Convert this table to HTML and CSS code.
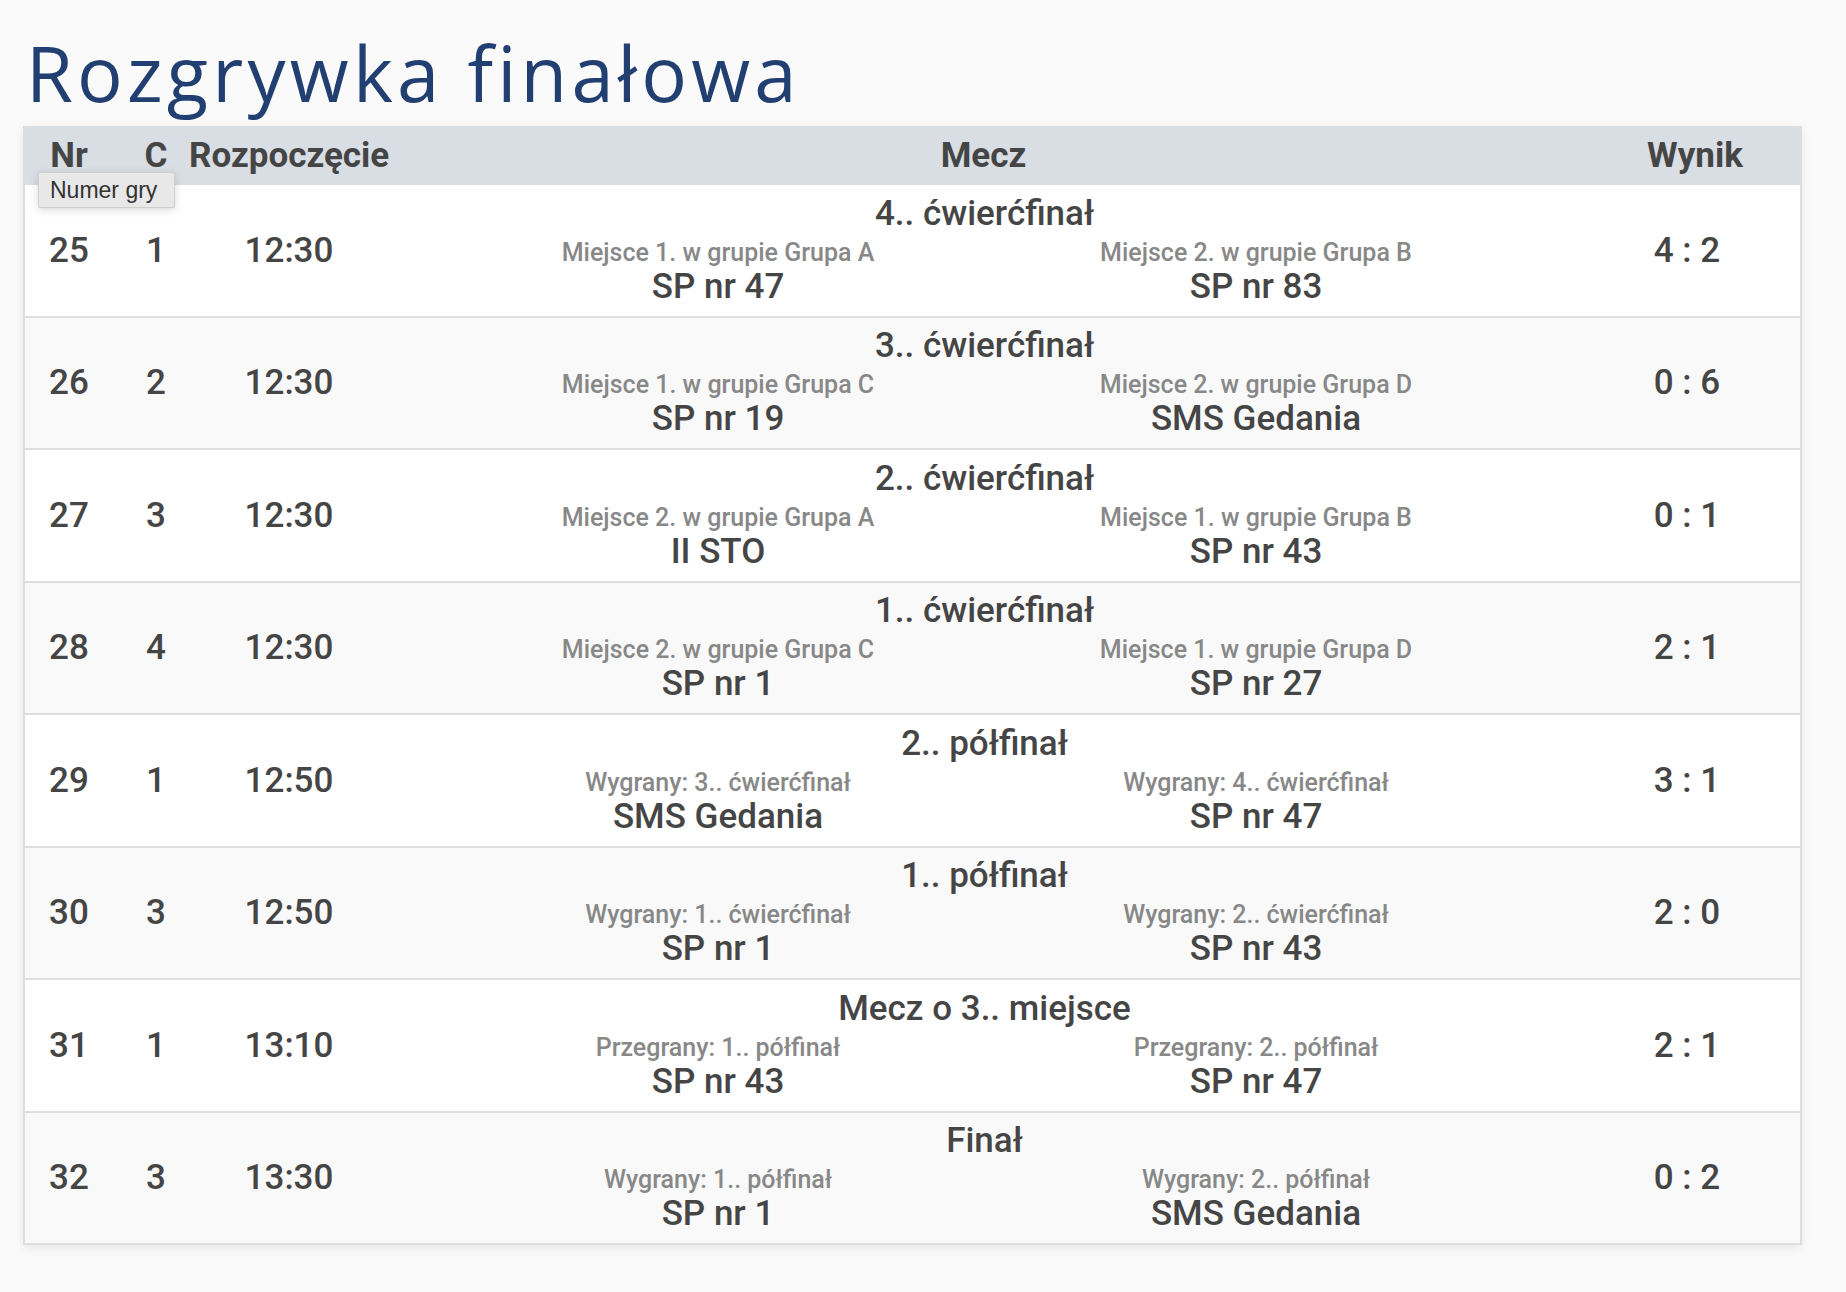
FILE: index.html
```html
<!DOCTYPE html>
<html lang="pl">
<head>
<meta charset="utf-8">
<title>Rozgrywka finałowa</title>
<link rel="stylesheet" href="styles.css">
</head>
<body>
<div class="page">
  <h1 class="title">Rozgrywka finałowa</h1>
  <div class="table">
    <div class="row head">
      <div class="cell c-nr">Nr<span class="tooltip">Numer gry</span></div>
      <div class="cell c-court">C</div>
      <div class="cell c-start">Rozpoczęcie</div>
      <div class="cell c-match">Mecz</div>
      <div class="cell c-score">Wynik</div>
    </div>
    <div class="body">
      <div class="row">
        <div class="cell c-nr">25</div><div class="cell c-court">1</div><div class="cell c-start">12:30</div>
        <div class="cell c-match"><div class="m-title">4.. ćwierćfinał</div><div class="teams"><div class="team"><div class="sub">Miejsce 1. w grupie Grupa A</div><div class="name">SP nr 47</div></div><div class="team"><div class="sub">Miejsce 2. w grupie Grupa B</div><div class="name">SP nr 83</div></div></div></div>
        <div class="cell c-score">4 : 2</div>
      </div>
      <div class="row">
        <div class="cell c-nr">26</div><div class="cell c-court">2</div><div class="cell c-start">12:30</div>
        <div class="cell c-match"><div class="m-title">3.. ćwierćfinał</div><div class="teams"><div class="team"><div class="sub">Miejsce 1. w grupie Grupa C</div><div class="name">SP nr 19</div></div><div class="team"><div class="sub">Miejsce 2. w grupie Grupa D</div><div class="name">SMS Gedania</div></div></div></div>
        <div class="cell c-score">0 : 6</div>
      </div>
      <div class="row">
        <div class="cell c-nr">27</div><div class="cell c-court">3</div><div class="cell c-start">12:30</div>
        <div class="cell c-match"><div class="m-title">2.. ćwierćfinał</div><div class="teams"><div class="team"><div class="sub">Miejsce 2. w grupie Grupa A</div><div class="name">II STO</div></div><div class="team"><div class="sub">Miejsce 1. w grupie Grupa B</div><div class="name">SP nr 43</div></div></div></div>
        <div class="cell c-score">0 : 1</div>
      </div>
      <div class="row">
        <div class="cell c-nr">28</div><div class="cell c-court">4</div><div class="cell c-start">12:30</div>
        <div class="cell c-match"><div class="m-title">1.. ćwierćfinał</div><div class="teams"><div class="team"><div class="sub">Miejsce 2. w grupie Grupa C</div><div class="name">SP nr 1</div></div><div class="team"><div class="sub">Miejsce 1. w grupie Grupa D</div><div class="name">SP nr 27</div></div></div></div>
        <div class="cell c-score">2 : 1</div>
      </div>
      <div class="row">
        <div class="cell c-nr">29</div><div class="cell c-court">1</div><div class="cell c-start">12:50</div>
        <div class="cell c-match"><div class="m-title">2.. półfinał</div><div class="teams"><div class="team"><div class="sub">Wygrany: 3.. ćwierćfinał</div><div class="name">SMS Gedania</div></div><div class="team"><div class="sub">Wygrany: 4.. ćwierćfinał</div><div class="name">SP nr 47</div></div></div></div>
        <div class="cell c-score">3 : 1</div>
      </div>
      <div class="row">
        <div class="cell c-nr">30</div><div class="cell c-court">3</div><div class="cell c-start">12:50</div>
        <div class="cell c-match"><div class="m-title">1.. półfinał</div><div class="teams"><div class="team"><div class="sub">Wygrany: 1.. ćwierćfinał</div><div class="name">SP nr 1</div></div><div class="team"><div class="sub">Wygrany: 2.. ćwierćfinał</div><div class="name">SP nr 43</div></div></div></div>
        <div class="cell c-score">2 : 0</div>
      </div>
      <div class="row">
        <div class="cell c-nr">31</div><div class="cell c-court">1</div><div class="cell c-start">13:10</div>
        <div class="cell c-match"><div class="m-title">Mecz o 3.. miejsce</div><div class="teams"><div class="team"><div class="sub">Przegrany: 1.. półfinał</div><div class="name">SP nr 43</div></div><div class="team"><div class="sub">Przegrany: 2.. półfinał</div><div class="name">SP nr 47</div></div></div></div>
        <div class="cell c-score">2 : 1</div>
      </div>
      <div class="row">
        <div class="cell c-nr">32</div><div class="cell c-court">3</div><div class="cell c-start">13:30</div>
        <div class="cell c-match"><div class="m-title">Finał</div><div class="teams"><div class="team"><div class="sub">Wygrany: 1.. półfinał</div><div class="name">SP nr 1</div></div><div class="team"><div class="sub">Wygrany: 2.. półfinał</div><div class="name">SMS Gedania</div></div></div></div>
        <div class="cell c-score">0 : 2</div>
      </div>
    </div>
  </div>
</div>
</body>
</html>
```
FILE: styles.css
```css
html, body {
  margin: 0;
  padding: 0;
  background: #fafafa;
}
.page {
  padding: 0 44px 40px 23px;
  font-family: Roboto, "Noto Sans", sans-serif;
  color: #454545;
}
.title {
  margin: 0 0 15px 3px;
  padding-top: 35px;
  font-family: "Open Sans", sans-serif;
  font-weight: 400;
  font-size: 76px;
  line-height: 76px;
  color: #213f71;
  letter-spacing: 4.2px;
}
.table {
  box-shadow: 0 3px 10px rgba(0, 0, 0, 0.08);
}
.row {
  display: grid;
  grid-template-columns: 88px 76px 200px 1fr 220px;
  align-items: center;
  text-align: center;
}
.c-court { padding-left: 10px; }
.head {
  background: #d9dee4;
  height: 59px;
  align-items: stretch;
  line-height: 59px;
  font-weight: 700;
  font-size: 35px;
  padding: 0 2px;
}
.head .cell { position: relative; }
.head .c-match { padding: 0 2px 0 0; }
.head .c-score { padding-left: 10px; }
.body {
  border: 2px solid #dedede;
  border-top: 0;
}
.body .row {
  font-weight: 500;
  font-size: 35px;
  border-bottom: 2px solid #dedede;
  background: #fff;
}
.body .row:nth-child(even) { background: #f9f9f9; }
.body .row:last-child { border-bottom: 0; }
.body .c-score { padding-right: 6px; }
.tooltip {
  position: absolute;
  left: 13px;
  top: 46px;
  width: 137px;
  height: 36px;
  box-sizing: border-box;
  padding-left: 11px;
  font-family: "Liberation Sans", Arial, sans-serif;
  font-weight: 400;
  font-size: 23px;
  line-height: 34px;
  text-align: left;
  color: #333;
  background: #e8e8e8;
  border: 1px solid #cfcfcf;
  border-radius: 2px;
  box-shadow: 0 2px 8px rgba(0, 0, 0, 0.15);
  z-index: 2;
}
.c-match {
  padding: 8.5px 0 11.5px;
}
.m-title {
  font-size: 35px;
  line-height: 40px;
  font-weight: 500;
}
.teams {
  display: grid;
  grid-template-columns: 538px 538px;
  justify-content: center;
  padding-left: 5px;
  margin-top: 2px;
}
.sub {
  font-size: 25px;
  line-height: 33px;
  color: #888;
  font-weight: 500;
}
.name {
  font-size: 35px;
  line-height: 35.5px;
  font-weight: 500;
}
```
